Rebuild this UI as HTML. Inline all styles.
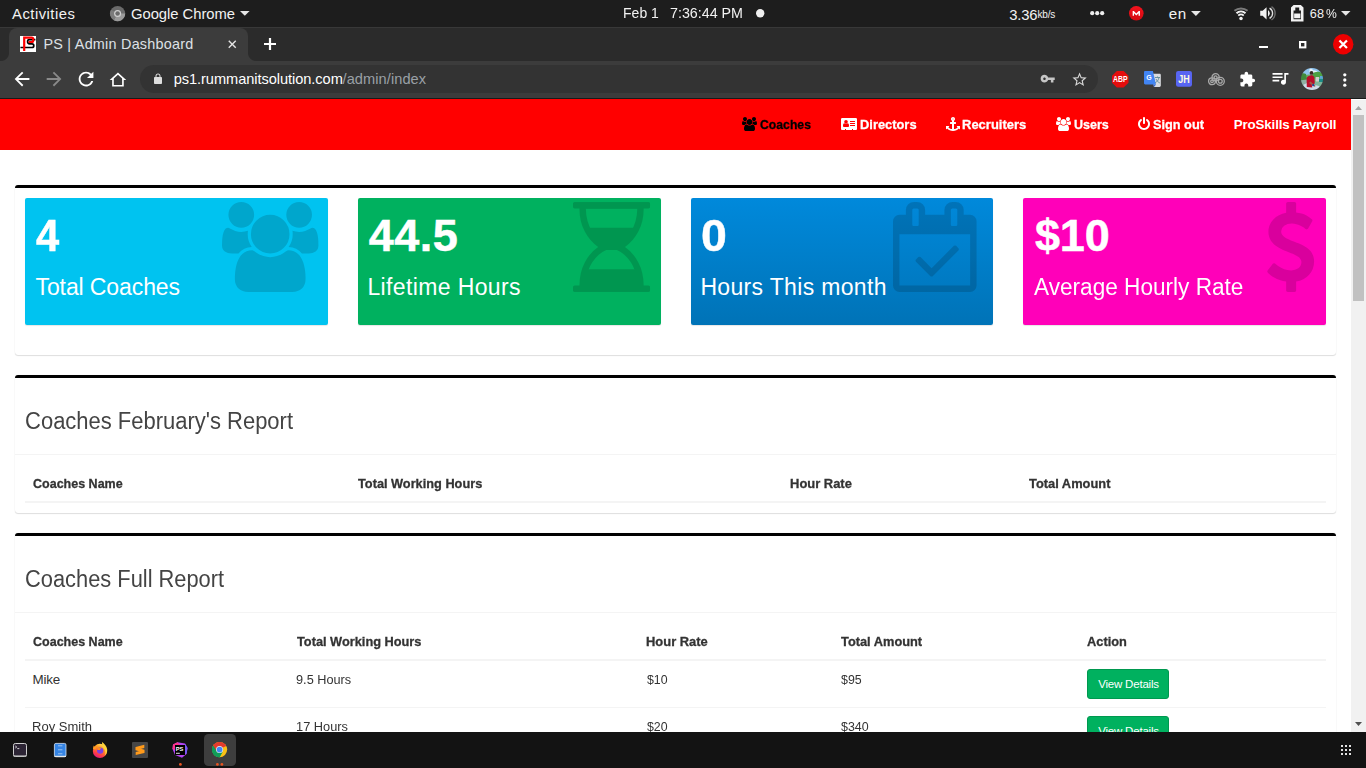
<!DOCTYPE html>
<html lang="en">
<head>
<meta charset="utf-8">
<title>PS | Admin Dashboard</title>
<style>
html,body{margin:0;padding:0}
body{width:1366px;height:768px;overflow:hidden;background:#131313;position:relative;font-family:"Liberation Sans",sans-serif;}
.t{position:absolute;white-space:nowrap;line-height:1em;height:1em;display:block}
svg{position:absolute;display:block;overflow:visible}
#topbar{position:absolute;left:0;top:0;width:1366px;height:27px;background:#1d1d1d}
#tabstrip{position:absolute;left:0;top:27px;width:1366px;height:34px;background:#2b2b2b;border-top:1px solid #383838;box-sizing:border-box}
#tab{position:absolute;left:9px;top:28px;width:239px;height:33px;background:#3c3c3c;border-radius:8px 8px 0 0}
#tab:before,#tab:after{content:"";position:absolute;bottom:0;width:8px;height:8px}
#tab:before{left:-8px;background:radial-gradient(circle at 0 0,rgba(60,60,60,0) 7.5px,#3c3c3c 8.5px)}
#tab:after{right:-8px;background:radial-gradient(circle at 100% 0,rgba(60,60,60,0) 7.5px,#3c3c3c 8.5px)}
#toolbar{position:absolute;left:0;top:61px;width:1366px;height:37px;background:#3c3c3c;border-bottom:1px solid #1a1a1a}
#omnibox{position:absolute;left:140px;top:65px;width:958px;height:28px;border-radius:14px;background:#333}
#view{position:absolute;left:0;top:99px;width:1351px;height:633px;overflow:hidden;background:#fff}
#scroll{position:absolute;left:1351px;top:99px;width:15px;height:633px;background:#f1f1f1;border-top:1px solid #fff;box-sizing:border-box}
#thumb{position:absolute;left:2px;top:15px;width:11px;height:186px;background:#c1c1c1}
#nav{position:absolute;left:0;top:0;width:1351px;height:51px;background:#ff0000;margin:0;padding:0}
#nav ul{list-style:none;margin:0;padding:0}
#nav li,#nav a{display:block;margin:0;padding:0;text-decoration:none}
.box{position:absolute;left:15px;width:1321px;background:#fff;border-top:3px solid #000;border-radius:3px;box-shadow:0 1px 1px rgba(0,0,0,.12),0 0 1px rgba(0,0,0,.12);box-sizing:border-box}
.hr{position:absolute;height:1px;background:#f4f4f4}
.sbox{position:absolute;top:99px;height:127px;border-radius:2px;box-shadow:0 1px 1px rgba(0,0,0,.1)}
.btn{position:absolute;left:1087px;width:82px;height:30px;box-sizing:border-box;background:#00b15f;border:1px solid #00984f;border-radius:3px;display:block}
#dock{position:absolute;left:0;top:732px;width:1366px;height:36px;background:#131313}
table,thead,tbody,tr,th,td{display:block;margin:0;padding:0;border:0;font-weight:normal}
h3,p{margin:0;padding:0;font-weight:normal}
</style>
</head>
<body>
<div id="topbar">
<span class="t" style="left:12.10px;top:6.85px;font-size:14.8px;letter-spacing:0.482px;color:#f2f2f2;">Activities</span>
<span class="t" style="left:131.01px;top:6.85px;font-size:14.8px;letter-spacing:-0.032px;color:#f2f2f2;">Google Chrome</span>
<span class="t" style="left:623.41px;top:5.85px;font-size:14.8px;transform:scaleX(0.9447);transform-origin:1.19px 0;color:#f2f2f2;">Feb 1</span>
<span class="t" style="left:670.25px;top:5.85px;font-size:14.8px;transform:scaleX(0.9642);transform-origin:0.75px 0;color:#f2f2f2;">7:36:44 PM</span>
<span class="t" style="left:1009.14px;top:7.85px;font-size:14.8px;letter-spacing:-0.112px;color:#f2f2f2;">3.36</span>
<span class="t" style="left:1037.38px;top:9.75px;font-size:10px;letter-spacing:-0.134px;color:#f2f2f2;">kb/s</span>
<span class="t" style="left:1168.67px;top:6.15px;font-size:15.2px;letter-spacing:0.572px;color:#f2f2f2;">en</span>
<span class="t" style="left:1309.67px;top:7.90px;font-size:12.7px;letter-spacing:0.200px;color:#f2f2f2;">68</span>
<span class="t" style="left:1325.96px;top:7.90px;font-size:12.7px;color:#f2f2f2;transform:scaleX(0.958);transform-origin:0.44px 0;">%</span>
<svg style="left:109.6px;top:5.6px" width="15.2" height="15.2" viewBox="0 0 16 16">
<circle cx="8" cy="8" r="8" fill="#6b6b6b"/>
<path d="M8 8 L16 8 A8 8 0 0 1 4 14.93 Z" fill="#9a9a9a"/>
<path d="M8 8 L4 14.93 A8 8 0 0 1 1.07 4 Z" fill="#7c7c7c"/>
<circle cx="8" cy="8" r="3.7" fill="#d0d0d0"/><circle cx="8" cy="8" r="2.4" fill="#6b6b6b"/></svg>
<svg style="left:240.3px;top:10.9px" width="9.60" height="4.90" viewBox="0 0 10 5"><path d="M0 0H10L5 5Z" fill="#e6e6e6"/></svg>
<svg style="left:1191.2px;top:10.9px" width="9.80" height="4.90" viewBox="0 0 10 5"><path d="M0 0H10L5 5Z" fill="#e6e6e6"/></svg>
<svg style="left:1341.3px;top:10.9px" width="9.50" height="4.90" viewBox="0 0 10 5"><path d="M0 0H10L5 5Z" fill="#e6e6e6"/></svg>
<svg style="left:755.8px;top:9px" width="8.4" height="8.4" viewBox="0 0 8 8"><circle cx="4" cy="4" r="4" fill="#efefef"/></svg>
<svg style="left:1089.8px;top:10.8px" width="14.4" height="4.4" viewBox="0 0 14.4 4.4"><circle cx="2.2" cy="2.2" r="2.1" fill="#eee"/><circle cx="7.2" cy="2.2" r="2.1" fill="#eee"/><circle cx="12.2" cy="2.2" r="2.1" fill="#eee"/></svg>
<svg style="left:1129px;top:5.7px" width="14.6" height="14.6" viewBox="0 0 16 16"><defs><linearGradient id="mg" x1="0" y1="0" x2="0" y2="1"><stop offset="0" stop-color="#f5121d"/><stop offset="1" stop-color="#d20a10"/></linearGradient></defs>
<circle cx="8" cy="8" r="8" fill="url(#mg)"/><path d="M4 10.6V5.4h1.3L8 8.2l2.7-2.8H12v5.2h-1.5V7.9L8 10.4 5.5 7.9v2.7z" fill="#fff"/></svg>
<svg style="left:1233.900px;top:4.800px" width="14" height="16" viewBox="0 0 14 16"><g fill="none" stroke-width="2">
<path d="M0.44 5.85A10 10 0 0 1 13.56 5.85" stroke="#7a7a7a"/><path d="M2.47 8.19A6.9 6.9 0 0 1 11.53 8.19" stroke="#f2f2f2"/><path d="M4.29 10.59A3.9 3.9 0 0 1 9.71 10.59" stroke="#f2f2f2" stroke-width="1.800"/></g>
<circle cx="7" cy="13.4" r="1.750" fill="#f2f2f2"/></svg>
<svg style="left:1260.4px;top:5.8px" width="16" height="14.6" viewBox="0 0 16 15">
<path d="M0 5h2.500L6.500 1.200v12.600L2.500 10H0z" fill="#f2f2f2"/>
<path d="M8 4.300c1.100.700 1.800 1.900 1.800 3.200S9.100 10 8 10.700z" fill="#f2f2f2"/>
<path d="M9.600 2.200c1.900 1.100 3.100 3.100 3.100 5.300s-1.200 4.200-3.100 5.300" fill="none" stroke="#e0e0e0" stroke-width="1.400"/>
<path d="M11.600.600c2.300 1.500 3.700 4 3.700 6.900s-1.400 5.400-3.700 6.900" fill="none" stroke="#6f6f6f" stroke-width="1.400"/></svg>
<svg style="left:1290.8px;top:4.7px" width="12.5" height="16.5" viewBox="0 0 12.5 16.5">
<path d="M2.600 0H9.800L12.500 2.600V16.500H0V2.600z M4.300 2.600H8.200V5.550H9.950V14.300H2.550V5.550H4.300z" fill="#f2f2f2" fill-rule="evenodd"/>
<rect x="3.150" y="8.500" width="6.200" height="4.700" fill="#f2f2f2"/></svg>
</div>
<div id="tabstrip"></div>
<div id="tab"></div>
<span class="t" style="left:43.48px;top:37.05px;font-size:14.4px;letter-spacing:0.237px;color:#dee1e6;">PS | Admin Dashboard</span>
<svg style="left:20px;top:36px" width="16" height="16" viewBox="0 0 16 16"><rect width="16" height="16" fill="#fff"/>
<path d="M15.400 3.700H9.200Q7.600 3.700 7.600 5.600Q7.600 7.900 9.600 7.900H12Q13.800 7.900 13.800 9.700Q13.800 11.500 12 11.500H.4" fill="none" stroke="#000" stroke-width="1.700"/>
<path d="M4.200 15V1.700H11.600Q13.300 1.700 13.300 3.900Q13.300 6 11.600 6H8.600" fill="none" stroke="#ff0000" stroke-width="2.200"/></svg>
<svg style="left:227.7px;top:39.700px" width="8.500" height="8.500" viewBox="0 0 9 9"><path d="M.8.800l7.400 7.400M8.200.800L.8 8.200" stroke="#e4e4e4" stroke-width="1.500" fill="none"/></svg>
<svg style="left:264px;top:38px" width="12" height="12" viewBox="0 0 12 12"><path d="M6 0v12M0 6h12" stroke="#fff" stroke-width="2.2" fill="none"/></svg>
<svg style="left:1258.500px;top:45.600px" width="9" height="2" viewBox="0 0 9 2"><rect width="9" height="2" fill="#fff"/></svg>
<svg style="left:1299.300px;top:40.700px" width="7.400" height="7.400" viewBox="0 0 7.400 7.400"><rect x="1" y="1" width="5.400" height="5.400" fill="none" stroke="#fff" stroke-width="2"/></svg>
<svg style="left:1332.800px;top:33.700px" width="20.400" height="20.400" viewBox="0 0 20 20"><circle cx="10" cy="10" r="10" fill="#ee0000"/><path d="M6.300 6.300l7.400 7.400M13.700 6.300l-7.400 7.400" stroke="#fff" stroke-width="2.200" fill="none"/></svg>
<div id="toolbar"></div>
<div id="omnibox"></div>
<span class="t" style="left:173.66px;top:71.95px;font-size:14.6px;letter-spacing:-0.050px;color:#ffffff;">ps1.rummanitsolution.com</span>
<span class="t" style="left:342.50px;top:71.95px;font-size:14.6px;letter-spacing:0.076px;color:#9aa0a6;">/admin/index</span>
<svg style="left:10.96px;top:67.86px" width="22.08" height="22.08" viewBox="0 0 24 24"><path fill="#fff"  d="M20 11H7.830l5.590-5.590L12 4l-8 8 8 8 1.410-1.410L7.830 13H20v-2z"/></svg>
<svg style="left:43.16px;top:67.86px" width="22.08" height="22.08" viewBox="0 0 24 24"><path fill="#8a8a8a"  d="M12 4l-1.410 1.410L16.170 11H4v2h12.170l-5.580 5.590L12 20l8-8z"/></svg>
<svg style="left:75.26px;top:68.06px" width="22.08" height="22.08" viewBox="0 0 24 24"><path fill="#fff"  d="M17.650 6.350C16.200 4.900 14.210 4 12 4c-4.420 0-7.990 3.580-7.990 8s3.570 8 7.990 8c3.730 0 6.840-2.550 7.730-6h-2.080c-.820 2.330-3.040 4-5.650 4-3.310 0-6-2.690-6-6s2.690-6 6-6c1.660 0 3.140.690 4.220 1.780L13 11h7V4l-2.350 2.350z"/></svg>
<svg style="left:108.04px;top:69.66px" width="19.92" height="19.92" viewBox="0 0 24 24"><path fill="#fff"  d="M12 3L2 12h3v8h14v-8h3L12 3zm0 2.700l5 4.500V18H7v-7.800l5-4.500z"/></svg>
<svg style="left:152.10px;top:72.75px" width="12.00" height="12.00" viewBox="0 0 24 24"><path fill="#dedede"  d="M18 8h-1V6c0-2.760-2.240-5-5-5S7 3.240 7 6v2H6c-1.100 0-2 .900-2 2v10c0 1.100.900 2 2 2h12c1.100 0 2-.900 2-2V10c0-1.100-.900-2-2-2zM9 6c0-1.660 1.340-3 3-3s3 1.340 3 3v2H9V6z"/></svg>
<svg style="left:1040.32px;top:70.92px" width="15.36" height="15.36" viewBox="0 0 24 24"><path fill="#c6c6c6"  d="M12.650 10C11.830 7.670 9.610 6 7 6c-3.310 0-6 2.690-6 6s2.690 6 6 6c2.610 0 4.830-1.670 5.650-4H17v4h4v-4h2v-4H12.650zM7 14c-1.100 0-2-.900-2-2s.900-2 2-2 2 .900 2 2-.900 2-2 2z"/></svg>
<svg style="left:1071.42px;top:70.68px" width="17.16" height="17.16" viewBox="0 0 24 24"><path fill="#d8d8d8"  d="M22 9.240l-7.190-.620L12 2 9.190 8.630 2 9.240l5.460 4.730L5.820 21 12 17.270 18.180 21l-1.630-7.030L22 9.240zM12 15.400l-3.760 2.270 1-4.280-3.320-2.880 4.380-.380L12 6.100l1.710 4.040 4.380.380-3.320 2.880 1 4.280L12 15.400z"/></svg>
<svg style="left:1111.800px;top:70.600px" width="16.500" height="16.500" viewBox="0 0 16 16"><path d="M4.700 0h6.600L16 4.700v6.600L11.300 16H4.700L0 11.300V4.700z" fill="#e40d0d"/><text x="8" y="10.900" font-family="Liberation Sans, sans-serif" font-weight="bold" font-size="8" text-anchor="middle" fill="#fff" textLength="14" lengthAdjust="spacingAndGlyphs">ABP</text></svg>
<svg style="left:1143.800px;top:71px" width="17" height="16" viewBox="0 0 17 16"><path d="M7.300 2.800h8.200c.800 0 1.300.500 1.300 1.300v10.500c0 .800-.500 1.300-1.300 1.300H10z" fill="#dadce0"/><path d="M1.300 0h7.600l3.100 13.400H1.300C.5 13.400 0 12.900 0 12.100V1.300C0 .5.500 0 1.300 0z" fill="#4285f4"/><path d="M9.300 13.400H12l-2 2.500z" fill="#3367d6"/><text x="2.200" y="9.300" font-family="Liberation Sans, sans-serif" font-weight="bold" font-size="7" fill="#fff">G</text><path d="M11 6.500h5M13.500 5.500v1M15 6.500c-.500 2.500-2 4.500-4 5.500M12 8c.700 1.600 2 3 3.800 4" stroke="#5f8a96" stroke-width=".9" fill="none"/></svg>
<svg style="left:1175.800px;top:71px" width="16" height="15.800" viewBox="0 0 16 15.800"><rect width="16" height="15.800" rx="2.200" fill="#5865f2"/><text x="8" y="11.800" font-family="Liberation Sans, sans-serif" font-weight="bold" font-size="10" text-anchor="middle" fill="#fffde0" textLength="11.500" lengthAdjust="spacingAndGlyphs">JH</text></svg>
<svg style="left:1207.600px;top:72.800px" width="17" height="13" viewBox="0 0 17 13"><g fill="none" stroke="#a9a9a9" stroke-width="1.300"><circle cx="7.600" cy="4.300" r="3.600"/><circle cx="7.600" cy="4.300" r="1.500"/><circle cx="4" cy="8.300" r="3.400"/><circle cx="4" cy="8.300" r="1.300"/><circle cx="12.300" cy="8.300" r="4"/><circle cx="12.300" cy="8.300" r="1.900"/></g></svg>
<svg style="left:1239.35px;top:70.85px" width="16.80" height="16.80" viewBox="0 0 24 24"><path fill="#fff"  d="M20.500 11H19V7c0-1.100-.900-2-2-2h-4V3.500C13 2.120 11.880 1 10.500 1S8 2.120 8 3.500V5H4c-1.100 0-1.990.900-1.990 2v3.800H3.500c1.490 0 2.700 1.210 2.700 2.700s-1.210 2.700-2.700 2.700H2V20c0 1.100.900 2 2 2h3.800v-1.500c0-1.490 1.210-2.700 2.700-2.700 1.490 0 2.700 1.210 2.700 2.700V22H17c1.100 0 2-.900 2-2v-4h1.500c1.380 0 2.500-1.120 2.500-2.500S21.880 11 20.500 11z"/></svg>
<svg style="left:1269.60px;top:67.88px" width="20.16" height="20.16" viewBox="0 0 24 24"><path fill="#fff"  d="M15 6H3v2h12V6zm0 4H3v2h12v-2zM3 16h8v-2H3v2zM17 6v8.180c-.310-.110-.650-.180-1-.180-1.660 0-3 1.340-3 3s1.340 3 3 3 3-1.340 3-3V8h3V6h-5z"/></svg>
<svg style="left:1301.100px;top:67.800px" width="22" height="22" viewBox="0 0 22 22"><defs><clipPath id="av"><circle cx="11" cy="11" r="11"/></clipPath><filter id="avb"><feGaussianBlur stdDeviation=".45"/></filter></defs><g clip-path="url(#av)"><g filter="url(#avb)"><rect x="-2" y="-2" width="26" height="26" fill="#6fae6a"/><path d="M-2 -2H24V6.500L14 7 8 6.500-2 8z" fill="#8fc4ee"/><path d="M8.500 .8c1.500-.6 3 .2 3.500 1.500l3 .4 2.500 1.800-4 1-5-1z" fill="#e9f2fa"/><path d="M1 5l3 1.500-2 1z" fill="#e3eef7"/><path d="M-2 7c2-2 5-2.500 7-1l1 6-8 2z" fill="#3f8a3c"/><path d="M11.500 6c2-2.500 7-3 10.500-.5V10l-10 .5z" fill="#4da043"/><path d="M14.600 9h3.600v4.600h-3.600z" fill="#cfcfcf"/><path d="M18 10.800h5v4.800h-5z" fill="#1f8d88"/><path d="M19 8h4v2.800h-4z" fill="#5aa6d6"/><path d="M-2 12.500l8-1v7l-5 3z" fill="#8fb0a4"/><path d="M12 14h11v5H12z" fill="#7fb59a"/><path d="M2 17l4-2 12 3 2 3-6 3H5z" fill="#cfdcea"/><circle cx="10.500" cy="4.900" r="1.900" fill="#3a2a24"/><path d="M9.600 6.500h2l.3 1.800h-2.500z" fill="#8a5a44"/><path d="M5.600 10.500c.3-2 2.200-3 4.600-3s3.400 1 3.300 3l.3 5-3 1.200.5 2.800-5.500-.5z" fill="#b90f2c"/><path d="M8 15l5.500 3.800 1.200-.8L9.500 13.500z" fill="#9c5c46"/><circle cx="12.200" cy="17.200" r="1.100" fill="#1f3f9f"/></g></g></svg>
<svg style="left:1342.600px;top:72.600px" width="3.600" height="14" viewBox="0 0 3.600 14"><circle cx="1.800" cy="1.800" r="1.650" fill="#fff"/><circle cx="1.800" cy="7" r="1.650" fill="#fff"/><circle cx="1.800" cy="12.200" r="1.650" fill="#fff"/></svg>
<div id="view">
 <nav id="nav"><ul>
  <li><a><svg style="left:741.90px;top:18.00px" width="15.00" height="14" viewBox="0 0 1920 1792"><path fill="#000" d="M593 896q-162 5-265 128h-134q-82 0-138-40.500t-56-118.500q0-353 124-353 6 0 43.500 21t97.500 42.500 119 21.500q67 0 133-23-5 37-5 66 0 139 81 256zm1071 637q0 120-73 189.500t-194 69.500h-874q-121 0-194-69.500t-73-189.500q0-53 3.500-103.500t14-109 26.500-108.500 43-97.500 62-81 85.500-53.500 111.500-20q10 0 43 21.500t73 48 107 48 135 21.500 135-21.500 107-48 73-48 43-21.500q61 0 111.500 20t85.500 53.500 62 81 43 97.500 26.500 108.500 14 109 3.500 103.500zm-1024-1277q0 106-75 181t-181 75-181-75-75-181 75-181 181-75 181 75 75 181zm704 384q0 159-112.500 271.500t-271.500 112.500-271.500-112.500-112.500-271.500 112.500-271.500 271.500-112.500 271.500 112.500 112.500 271.500zm576 225q0 78-56 118.500t-138 40.500h-134q-103-123-265-128 81-117 81-256 0-29-5-66 66 23 133 23 59 0 119-21.500t97.500-42.500 43.500-21q124 0 124 353zm-128-609q0 106-75 181t-181 75-181-75-75-181 75-181 181-75 181 75 75 181z"/></svg><span class="t" style="left:760.10px;top:19.05px;font-size:13.4px;transform:scaleX(0.9117);transform-origin:0.50px 0;-webkit-text-stroke:0.3px #000;font-weight:bold;color:#000;">Coaches</span></a></li>
  <li><a><svg style="left:840.50px;top:18.00px" width="16.00" height="14" viewBox="0 0 2048 1792"><path fill="#fff" d="M1024 1131q0-64-9-117.500t-29.500-103-60.500-78-97-28.500q-6 4-30 18t-37.500 21.500-35.500 17.500-43 14.500-42 4.500-42-4.500-43-14.500-35.500-17.500-37.500-21.500-30-18q-57 0-97 28.500t-60.500 78-29.500 103-9 117.500 37 106.500 91 42.500h512q54 0 91-42.500t37-106.500zm-157-520q0-94-66.500-160.500t-160.500-66.500-160.500 66.500-66.500 160.500 66.500 160.500 160.500 66.500 160.500-66.500 66.500-160.500zm925 509v-64q0-14-9-23t-23-9h-576q-14 0-23 9t-9 23v64q0 14 9 23t23 9h576q14 0 23-9t9-23zm0-260v-56q0-15-10.500-25.500t-25.500-10.500h-568q-15 0-25.500 10.500t-10.500 25.500v56q0 15 10.500 25.500t25.500 10.500h568q15 0 25.500-10.500t10.500-25.500zm0-252v-64q0-14-9-23t-23-9h-576q-14 0-23 9t-9 23v64q0 14 9 23t23 9h576q14 0 23-9t9-23zm256-320v1216q0 66-47 113t-113 47h-352v-96q0-14-9-23t-23-9h-64q-14 0-23 9t-9 23v96h-768v-96q0-14-9-23t-23-9h-64q-14 0-23 9t-9 23v96h-352q-66 0-113-47t-47-113v-1216q0-66 47-113t113-47h1728q66 0 113 47t47 113z"/></svg><span class="t" style="left:859.62px;top:19.05px;font-size:13.4px;transform:scaleX(0.9610);transform-origin:0.88px 0;-webkit-text-stroke:0.3px #fff;font-weight:bold;color:#fff;">Directors</span></a></li>
  <li><a><svg style="left:945.60px;top:18.00px" width="14.00" height="14" viewBox="0 0 1792 1792"><path fill="#fff" d="M960 256q0-26-19-45t-45-19-45 19-19 45 19 45 45 19 45-19 19-45zm832 928v352q0 22-20 30-8 2-12 2-12 0-23-9l-93-93q-119 143-318.500 226.500t-429.500 83.500-429.500-83.500-318.500-226.500l-93 93q-9 9-23 9-4 0-12-2-20-8-20-30v-352q0-14 9-23t23-9h352q22 0 30 20 8 19-7 35l-100 100q67 91 189.500 153.500t271.500 82.500v-647h-192q-26 0-45-19t-19-45v-128q0-26 19-45t45-19h192v-163q-58-34-93-92.500t-35-128.500q0-106 75-181t181-75 181 75 75 181q0 70-35 128.500t-93 92.500v163h192q26 0 45 19t19 45v128q0 26-19 45t-45 19h-192v647q149-20 271.500-82.500t189.500-153.500l-100-100q-15-16-7-35 8-20 30-20h352q14 0 23 9t9 23z"/></svg><span class="t" style="left:962.42px;top:19.05px;font-size:13.4px;transform:scaleX(0.9693);transform-origin:0.88px 0;-webkit-text-stroke:0.3px #fff;font-weight:bold;color:#fff;">Recruiters</span></a></li>
  <li><a><svg style="left:1056.20px;top:18.00px" width="15.00" height="14" viewBox="0 0 1920 1792"><path fill="#fff" d="M593 896q-162 5-265 128h-134q-82 0-138-40.500t-56-118.500q0-353 124-353 6 0 43.500 21t97.500 42.500 119 21.500q67 0 133-23-5 37-5 66 0 139 81 256zm1071 637q0 120-73 189.500t-194 69.500h-874q-121 0-194-69.500t-73-189.500q0-53 3.500-103.500t14-109 26.500-108.500 43-97.500 62-81 85.500-53.500 111.500-20q10 0 43 21.500t73 48 107 48 135 21.500 135-21.500 107-48 73-48 43-21.500q61 0 111.500 20t85.500 53.500 62 81 43 97.500 26.500 108.500 14 109 3.500 103.500zm-1024-1277q0 106-75 181t-181 75-181-75-75-181 75-181 181-75 181 75 75 181zm704 384q0 159-112.500 271.500t-271.500 112.500-271.500-112.500-112.500-271.500 112.500-271.500 271.500-112.500 271.500 112.500 112.500 271.500zm576 225q0 78-56 118.500t-138 40.500h-134q-103-123-265-128 81-117 81-256 0-29-5-66 66 23 133 23 59 0 119-21.500t97.500-42.500 43.500-21q124 0 124 353zm-128-609q0 106-75 181t-181 75-181-75-75-181 75-181 181-75 181 75 75 181z"/></svg><span class="t" style="left:1073.75px;top:19.05px;font-size:13.4px;transform:scaleX(0.9338);transform-origin:0.75px 0;-webkit-text-stroke:0.3px #fff;font-weight:bold;color:#fff;">Users</span></a></li>
  <li><a><svg style="left:1138.40px;top:18.00px" width="12.00" height="14" viewBox="0 0 1536 1792"><path fill="#fff" d="M1536 896q0 156-61 298t-164 245-245 164-298 61-298-61-245-164-164-245-61-298q0-182 80.500-343t226.500-270q43-32 95.500-25t83.500 50q32 42 24.500 94.500t-49.500 84.500q-98 74-151.500 181t-53.500 228q0 104 40.500 198.500t109.500 163.500 163.500 109.500 198.500 40.500 198.500-40.500 163.500-109.500 109.500-163.500 40.500-198.500q0-121-53.500-228t-151.500-181q-42-32-49.500-84.500t24.500-94.500q31-43 84-50t95 25q146 109 226.500 270t80.500 343zm-640-768v640q0 52-38 90t-90 38-90-38-38-90v-640q0-52 38-90t90-38 90 38 38 90z"/></svg><span class="t" style="left:1153.12px;top:19.05px;font-size:13.4px;transform:scaleX(0.9499);transform-origin:0.38px 0;-webkit-text-stroke:0.3px #fff;font-weight:bold;color:#fff;">Sign out</span></a></li>
  <li><a><span class="t" style="left:1233.83px;top:19.05px;font-size:13.4px;letter-spacing:-0.186px;font-weight:bold;color:#fff;">ProSkills Payroll</span></a></li>
 </ul></nav>
 <section>
  <div class="box" style="top:86px;height:170px"></div>
  <div class="small-box"><div class="sbox" style="left:25px;width:303px;background:#00c3f0"></div><div class="icon"><svg style="left:221.60px;top:102.80px" width="96.43" height="90" viewBox="0 0 1920 1792"><path fill="rgba(0,0,0,0.15)" d="M593 896q-162 5-265 128h-134q-82 0-138-40.500t-56-118.500q0-353 124-353 6 0 43.500 21t97.500 42.500 119 21.500q67 0 133-23-5 37-5 66 0 139 81 256zm1071 637q0 120-73 189.500t-194 69.500h-874q-121 0-194-69.500t-73-189.500q0-53 3.500-103.500t14-109 26.500-108.500 43-97.500 62-81 85.500-53.500 111.500-20q10 0 43 21.500t73 48 107 48 135 21.500 135-21.500 107-48 73-48 43-21.500q61 0 111.500 20t85.500 53.500 62 81 43 97.500 26.500 108.500 14 109 3.500 103.500zm-1024-1277q0 106-75 181t-181 75-181-75-75-181 75-181 181-75 181 75 75 181zm704 384q0 159-112.500 271.500t-271.500 112.500-271.500-112.500-112.500-271.500 112.500-271.500 271.500-112.500 271.500 112.500 112.500 271.500zm576 225q0 78-56 118.500t-138 40.500h-134q-103-123-265-128 81-117 81-256 0-29-5-66 66 23 133 23 59 0 119-21.500t97.500-42.500 43.500-21q124 0 124 353zm-128-609q0 106-75 181t-181 75-181-75-75-181 75-181 181-75 181 75 75 181z"/></svg></div><div class="inner"><h3 class="t" style="left:35.90px;top:114.25px;font-size:45px;font-weight:bold;color:#fff;transform:scaleX(0.928);transform-origin:0.00px 0;-webkit-text-stroke:0.5px #fff;">4</h3>
<p class="t" style="left:35.54px;top:176.75px;font-size:23px;letter-spacing:-0.106px;color:#fff;">Total Coaches</p></div></div>
  <div class="small-box"><div class="sbox" style="left:358px;width:303px;background:#00b15f"></div><div class="icon"><svg style="left:573.4px;top:102.80px" width="77.14" height="90" viewBox="0 0 1536 1792"><defs><clipPath id="hgc"><rect x="0" y="128" width="1536" height="384"/><rect x="0" y="955" width="1536" height="389"/></clipPath><mask id="hgm"><path d="M1408 128q0 261-106.500 461.500t-266.500 306.500q160 106 266.500 306.500t106.500 461.500h96q14 0 23 9t9 23v64q0 14-9 23t-23 9h-1472q-14 0-23-9t-9-23v-64q0-14 9-23t23-9h96q0-261 106.500-461.500t266.500-306.500q-160-106-266.500-306.500t-106.500-461.500h-96q-14 0-23-9t-9-23v-64q0-14 9-23t23-9h1472q14 0 23 9t9 23v64q0 14-9 23t-23 9h-96z" fill="#fff"/><g clip-path="url(#hgc)"><path d="M874 836q77-29 149-92.500t129.500-152.500 92.500-210 35-253h-1024q0 132 35 253t92.500 210 129.500 152.500 149 92.500q19 7 30.500 23.500t11.500 36.500-11.500 36.500-30.500 23.500q-77 29-149 92.500t-129.500 152.500-92.500 210-35 253h1024q0-132-35-253t-92.500-210-129.500-152.500-149-92.500q-19-7-30.500-23.500t-11.500-36.500 11.500-36.500 30.500-23.500z" fill="#000"/></g></mask></defs><rect width="1536" height="1792" fill="rgba(0,0,0,0.15)" mask="url(#hgm)"/></svg></div><div class="inner"><h3 class="t" style="left:368.70px;top:114.25px;font-size:45px;letter-spacing:0.479px;font-weight:bold;color:#fff;-webkit-text-stroke:0.5px #fff;">44.5</h3>
<p class="t" style="left:367.40px;top:176.75px;font-size:23px;letter-spacing:0.372px;color:#fff;">Lifetime Hours</p></div></div>
  <div class="small-box"><div class="sbox" style="left:691px;width:302px;background:linear-gradient(#0089db,#0073b7)"></div><div class="icon"><svg style="left:893.20px;top:102.80px" width="83.57" height="90" viewBox="0 0 1664 1792"><path fill="rgba(0,0,0,0.15)" d="M1303 964l-512 512q-10 9-23 9t-23-9l-288-288q-9-10-9-23t9-22l46-46q9-9 22-9t23 9l220 220 444-444q10-9 23-9t22 9l46 46q9 9 9 22t-9 23zm-1175 700h1408v-1024h-1408v1024zm384-1216v-288q0-14-9-23t-23-9h-64q-14 0-23 9t-9 23v288q0 14 9 23t23 9h64q14 0 23-9t9-23zm768 0v-288q0-14-9-23t-23-9h-64q-14 0-23 9t-9 23v288q0 14 9 23t23 9h64q14 0 23-9t9-23zm384-64v1280q0 52-38 90t-90 38h-1408q-52 0-90-38t-38-90v-1280q0-52 38-90t90-38h128v-96q0-66 47-113t113-47h64q66 0 113 47t47 113v96h384v-96q0-66 47-113t113-47h64q66 0 113 47t47 113v96h128q52 0 90 38t38 90z"/></svg></div><div class="inner"><h3 class="t" style="left:700.79px;top:114.25px;font-size:45px;font-weight:bold;color:#fff;transform:scaleX(1.032);transform-origin:1.41px 0;-webkit-text-stroke:0.5px #fff;">0</h3>
<p class="t" style="left:700.40px;top:176.75px;font-size:23px;letter-spacing:0.332px;color:#fff;">Hours This month</p></div></div>
  <div class="small-box"><div class="sbox" style="left:1023px;width:303px;background:#ff00b9"></div><div class="icon"><svg style="left:1264.60px;top:102.80px" width="51.43" height="90" viewBox="0 0 1024 1792"><path fill="rgba(0,0,0,0.15)" d="M978 1185q0 153-99.500 263.500t-258.500 136.500v175q0 14-9 23t-23 9h-135q-13 0-22.500-9.500t-9.500-22.500v-175q-66-9-127.500-31t-101.500-44.500-74-48-46.500-37.500-17.500-18q-17-21-2-41l103-135q7-10 23-12 15-2 24 9l2 2q113 99 243 125 37 8 74 8 81 0 142.500-43t61.500-122q0-28-15-53t-33.500-42-58.500-37.500-66-32-80-32.500q-39-16-61.500-25t-61.500-26.500-62.500-31-56.500-35.500-53.500-42.500-43.500-49-35.500-58-21-66.500-8.500-78q0-138 98-242t255-134v-180q0-13 9.500-22.500t22.500-9.500h135q14 0 23 9t9 23v176q57 6 110.500 23t87 33.500 63.500 37.500 39 29 15 14q17 18 5 38l-81 146q-8 15-23 16-14 3-27-7-3-3-14.500-12t-39-26.500-58.500-32-74.500-26-85.500-11.500q-95 0-155 43t-60 111q0 26 8.500 48t29.500 41.500 39.500 33 56 31 60.500 27 70 27.500q53 20 81 31.500t76 35 75.500 42.500 62 50 53 63.500 31.500 76.500 13 94z"/></svg></div><div class="inner"><h3 class="t" style="left:1034.90px;top:114.25px;font-size:45px;letter-spacing:-0.078px;font-weight:bold;color:#fff;-webkit-text-stroke:0.5px #fff;">$10</h3>
<p class="t" style="left:1033.70px;top:176.75px;font-size:23px;transform:scaleX(0.9828);transform-origin:0.00px 0;color:#fff;">Average Hourly Rate</p></div></div>
 </section>
 <section>
  <div class="box" style="top:276px;height:138px"></div>
  <div class="box-header"><h3 class="t" style="left:24.62px;top:310.75px;font-size:23px;transform:scaleX(0.9552);transform-origin:1.08px 0;color:#444;">Coaches February&#x27;s Report</h3><div class="hr" style="left:15px;width:1321px;top:355px"></div></div>
  <div class="box-body"><table><thead><tr><th class="t" style="left:33.00px;top:378.05px;font-size:13.4px;transform:scaleX(0.9336);transform-origin:0.50px 0;-webkit-text-stroke:0.3px #333;font-weight:bold;color:#333;">Coaches Name</th>
<th class="t" style="left:358.48px;top:378.05px;font-size:13.4px;transform:scaleX(0.9524);transform-origin:0.12px 0;-webkit-text-stroke:0.3px #333;font-weight:bold;color:#333;">Total Working Hours</th>
<th class="t" style="left:789.73px;top:378.05px;font-size:13.4px;transform:scaleX(0.9665);transform-origin:0.88px 0;-webkit-text-stroke:0.3px #333;font-weight:bold;color:#333;">Hour Rate</th>
<th class="t" style="left:1029.47px;top:378.05px;font-size:13.4px;transform:scaleX(0.9604);transform-origin:0.12px 0;-webkit-text-stroke:0.3px #333;font-weight:bold;color:#333;">Total Amount</th></tr></thead><tbody></tbody></table>
   <div class="hr" style="left:25px;width:1301px;top:402px;height:2px"></div></div>
 </section>
 <section>
  <div class="box" style="top:434px;height:400px"></div>
  <div class="box-header"><h3 class="t" style="left:24.52px;top:468.75px;font-size:23px;transform:scaleX(0.9494);transform-origin:1.08px 0;color:#444;">Coaches Full Report</h3><div class="hr" style="left:15px;width:1321px;top:513px"></div></div>
  <div class="box-body"><table><thead><tr><th class="t" style="left:33.00px;top:536.05px;font-size:13.4px;transform:scaleX(0.9336);transform-origin:0.50px 0;-webkit-text-stroke:0.3px #333;font-weight:bold;color:#333;">Coaches Name</th>
<th class="t" style="left:296.68px;top:536.05px;font-size:13.4px;transform:scaleX(0.9540);transform-origin:0.12px 0;-webkit-text-stroke:0.3px #333;font-weight:bold;color:#333;">Total Working Hours</th>
<th class="t" style="left:645.83px;top:536.05px;font-size:13.4px;transform:scaleX(0.9649);transform-origin:0.88px 0;-webkit-text-stroke:0.3px #333;font-weight:bold;color:#333;">Hour Rate</th>
<th class="t" style="left:840.58px;top:536.05px;font-size:13.4px;transform:scaleX(0.9569);transform-origin:0.12px 0;-webkit-text-stroke:0.3px #333;font-weight:bold;color:#333;">Total Amount</th>
<th class="t" style="left:1086.59px;top:536.05px;font-size:13.4px;transform:scaleX(0.9566);transform-origin:0.31px 0;-webkit-text-stroke:0.3px #333;font-weight:bold;color:#333;">Action</th></tr></thead>
   <tbody><tr><td class="t" style="left:32.44px;top:574.05px;font-size:13.4px;letter-spacing:-0.150px;color:#333;">Mike</td>
<td class="t" style="left:296.18px;top:574.05px;font-size:13.4px;transform:scaleX(0.9506);transform-origin:0.62px 0;color:#333;">9.5 Hours</td>
<td class="t" style="left:646.58px;top:574.05px;font-size:13.4px;transform:scaleX(0.9209);transform-origin:0.12px 0;color:#333;">$10</td>
<td class="t" style="left:840.58px;top:574.05px;font-size:13.4px;transform:scaleX(0.9256);transform-origin:0.12px 0;color:#333;">$95</td><td><a class="btn" style="top:570px"></a><span class="t" style="left:1098.20px;top:579.50px;font-size:11.5px;letter-spacing:-0.199px;color:#fff;">View Details</span></td></tr>
   <tr><td class="t" style="left:32.44px;top:621.05px;font-size:13.4px;transform:scaleX(0.9714);transform-origin:1.06px 0;color:#333;">Roy Smith</td>
<td class="t" style="left:295.80px;top:621.05px;font-size:13.4px;transform:scaleX(0.9543);transform-origin:1.00px 0;color:#333;">17 Hours</td>
<td class="t" style="left:646.58px;top:621.05px;font-size:13.4px;transform:scaleX(0.9209);transform-origin:0.12px 0;color:#333;">$20</td>
<td class="t" style="left:840.58px;top:621.05px;font-size:13.4px;transform:scaleX(0.9291);transform-origin:0.12px 0;color:#333;">$340</td><td><a class="btn" style="top:617px"></a><span class="t" style="left:1098.20px;top:626.50px;font-size:11.5px;letter-spacing:-0.199px;color:#fff;">View Details</span></td></tr></tbody></table>
   <div class="hr" style="left:25px;width:1301px;top:560px;height:2px"></div>
   <div class="hr" style="left:25px;width:1301px;top:608px"></div></div>
 </section>
</div>
<div id="scroll"><div id="thumb"></div>
<svg style="left:4px;top:5.500px" width="7" height="4" viewBox="0 0 7 4"><path d="M0 4L3.500 0 7 4z" fill="#a3a3a3"/></svg>
<svg style="left:4px;top:622px" width="7" height="4" viewBox="0 0 7 4"><path d="M0 0L3.500 4 7 0z" fill="#505050"/></svg>
</div>
<div id="dock">
<svg style="left:13px;top:11px" width="14" height="14" viewBox="0 0 14 14"><rect x=".5" y=".5" width="13" height="13" rx="1.800" fill="#2c2434" stroke="#cfcfcf" stroke-width="1"/><rect x=".5" y="12.400" width="13" height="1.200" fill="#bdbdbd"/><path d="M2.300 3l1.400 1-1.400 1M4.300 5.600h2" stroke="#fff" stroke-width=".8" fill="none"/></svg>
<svg style="left:54px;top:11px" width="12.400" height="14.200" viewBox="0 0 12.400 14.200"><rect x=".4" y=".4" width="11.600" height="13.400" rx="1.500" fill="#3584e4" stroke="#d8e6f7" stroke-width=".8"/><rect x=".4" y="12.800" width="11.600" height="1.200" fill="#e8e8e8"/><path d="M4 2.800h4.400M4 6.800h4.400M4 10.800h4.400" stroke="#9bc2f0" stroke-width="1"/></svg>
<svg style="left:92px;top:10px" width="16" height="16" viewBox="0 0 16 16"><defs><linearGradient id="ffg" x1=".8" y1="0" x2=".3" y2="1"><stop offset="0" stop-color="#fff36b"/><stop offset=".35" stop-color="#ff9a1f"/><stop offset=".75" stop-color="#ff3c47"/><stop offset="1" stop-color="#e31587"/></linearGradient></defs><circle cx="7.900" cy="8.900" r="7.100" fill="url(#ffg)"/><path d="M10 0c2 1.500 4.800 4 5.200 7.500.300 2.500-.800 5-2.500 6.300 1-2 1-4.500-.200-6.500C11.800 5.800 10 4.500 10 0z" fill="#ffd43b"/><path d="M1.800 3.500c.500 1 1.500 1.500 2.700 1.800L3.200 7.500 1 7c0-1.300.300-2.500.800-3.500z" fill="#ff9a1f"/><circle cx="8.200" cy="8.600" r="3.200" fill="#7b3fe4"/><path d="M5 6.500c1-.800 3-1 4.500 0-1 .2-1.500.8-1.500 1.500H5.500z" fill="#ff8a1f"/></svg>
<svg style="left:132px;top:10px" width="16" height="16" viewBox="0 0 16 16"><rect width="16" height="16" rx="1" fill="#464646"/><g fill="#ff9a1a"><path d="M3.700 4.900L12.300 2.800V6.100L3.700 8.200z"/><path d="M3.700 4.900V8.200L12.300 10.900V7.700z"/><path d="M12.300 7.700V10.900L3.700 13.100V9.900z"/></g></svg>
<svg style="left:172px;top:10px" width="16" height="16" viewBox="0 0 16 16"><path d="M1 2.500L5.500.3 13 1.500l2.500 4.500-1 6-4.500 3.700L3 13 .5 7z" fill="#b345f1"/><path d="M1 2.500L5.500.3 8 3 3 8 .5 7z" fill="#ff318c"/><path d="M13 1.500l2.500 4.500-1 6L11 9z" fill="#765af8"/><rect x="3" y="3" width="10" height="10" fill="#000"/><text x="3.700" y="8.600" font-family="Liberation Sans, sans-serif" font-weight="bold" font-size="5.600" fill="#fff" textLength="7.600" lengthAdjust="spacingAndGlyphs">PS</text><rect x="4" y="10.800" width="3.800" height=".9" fill="#fff"/></svg>
<svg style="left:178.600px;top:31px" width="2.800" height="2.800" viewBox="0 0 2.800 2.800"><circle cx="1.400" cy="1.400" r="1.400" fill="#e95420"/></svg>
<svg style="left:204px;top:2px" width="32" height="32" viewBox="0 0 32 32"><rect width="32" height="32" rx="4.500" fill="#3e3e3e"/></svg>
<svg style="left:212.400px;top:10.400px" width="15.200" height="15.200" viewBox="0 0 16 16"><circle cx="8" cy="8" r="8" fill="#fbc116"/>
<path d="M8 8L1.070 4A8 8 0 0 1 14.930 4z" fill="#e33b2e"/>
<path d="M8 8L1.070 4A8 8 0 0 0 8 16l3.200-5.500z" fill="#109d58"/>
<path d="M8 4.400h6.700A8 8 0 0 0 1.300 3.600L4.900 9.800z" fill="#e33b2e"/>
<path d="M4.900 9.800L1.070 4A8 8 0 0 0 8 16l3.100-6.200z" fill="#109d58"/>
<circle cx="8" cy="8" r="3.700" fill="#f1f1f1"/><circle cx="8" cy="8" r="3" fill="#4287f5"/></svg>
<svg style="left:216.400px;top:31px" width="7.300" height="2.800" viewBox="0 0 7.300 2.800"><circle cx="1.400" cy="1.400" r="1.400" fill="#e95420"/><circle cx="5.900" cy="1.400" r="1.400" fill="#e95420"/></svg>
<svg style="left:1341px;top:13px" width="10" height="10" viewBox="0 0 10 10"><rect x="0" y="0" width="2" height="2" fill="#e2e2e2"/><rect x="0" y="4" width="2" height="2" fill="#e2e2e2"/><rect x="0" y="8" width="2" height="2" fill="#e2e2e2"/><rect x="4" y="0" width="2" height="2" fill="#e2e2e2"/><rect x="4" y="4" width="2" height="2" fill="#e2e2e2"/><rect x="4" y="8" width="2" height="2" fill="#e2e2e2"/><rect x="8" y="0" width="2" height="2" fill="#e2e2e2"/><rect x="8" y="4" width="2" height="2" fill="#e2e2e2"/><rect x="8" y="8" width="2" height="2" fill="#e2e2e2"/></svg>
</div>
</body>
</html>
